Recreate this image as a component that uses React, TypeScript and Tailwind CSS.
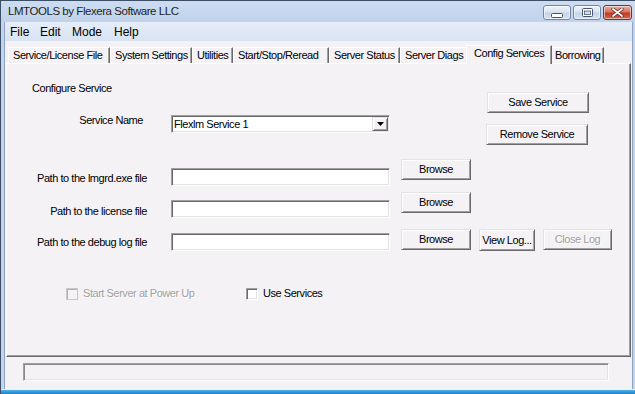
import React from 'react';

const raised =
  'border border-t-[#e3e3e3] border-l-[#e3e3e3] border-r-[#696969] border-b-[#696969] shadow-[inset_1px_1px_0_#ffffff,inset_-1px_-1px_0_#a0a0a0] bg-[#f5f2f6]';
const sunken =
  'border border-t-[#a0a0a0] border-l-[#a0a0a0] border-r-white border-b-white shadow-[inset_1px_1px_0_#696969,inset_-1px_-1px_0_#e3e3e3] bg-white';
const disabledText = 'text-[#a0a0a0] [text-shadow:1px_1px_0_#ffffff]';

type Tab = { label: string; cls: string; active?: boolean };

const tabs: Tab[] = [
  { label: 'Service/License File', cls: 'w-[102px]' },
  { label: 'System Settings', cls: 'w-[82px]' },
  { label: 'Utilities', cls: 'w-[41px]' },
  { label: 'Start/Stop/Reread', cls: 'w-[96px]' },
  { label: 'Server Status', cls: 'w-[71px]' },
  { label: 'Server Diags', cls: 'w-[68px]' },
  { label: 'Config Services', cls: 'w-[86px]', active: true },
  { label: 'Borrowing', cls: 'w-[54px]' },
];

function WinButton({ label, className = '', disabled }: { label: string; className?: string; disabled?: boolean }) {
  return (
    <button type="button" className={`${raised} flex items-center justify-center ${className}`}>
      <span className={disabled ? disabledText : ''}>{label}</span>
    </button>
  );
}

function CaptionButton({ kind }: { kind: 'min' | 'max' | 'close' }) {
  const base =
    kind === 'close'
      ? 'w-[29px] border-[#7a2e25] bg-[linear-gradient(#eab0a2,#d8735f_45%,#c23c28_55%,#d2664f)]'
      : 'w-[28px] border-[#6f87a8] bg-[linear-gradient(#eef3fa,#d9e4f2_45%,#c4d4e8_55%,#d6e2f1)]';
  return (
    <div className={`h-[15px] rounded-[3px] border flex items-center justify-center shadow-[inset_0_0_0_1px_rgba(255,255,255,0.55)] ${base}`}>
      {kind === 'min' && (
        <svg width="12" height="5" viewBox="0 0 12 5" className="mt-[5px]">
          <rect x="0.5" y="0.5" width="11" height="4" rx="1" fill="#ffffff" stroke="#45576f" />
        </svg>
      )}
      {kind === 'max' && (
        <svg width="11" height="9" viewBox="0 0 11 9">
          <rect x="0.5" y="0.5" width="10" height="8" rx="1" fill="#ffffff" stroke="#45576f" />
          <rect x="2.5" y="3" width="6" height="3.5" fill="#d5e0ee" stroke="#45576f" strokeWidth="0.8" />
        </svg>
      )}
      {kind === 'close' && (
        <svg width="13" height="9" viewBox="0 0 13 9">
          <path d="M2 1 L11 8 M11 1 L2 8" stroke="#5a1d16" strokeWidth="3.2" strokeLinecap="round" />
          <path d="M2 1 L11 8 M11 1 L2 8" stroke="#ffffff" strokeWidth="1.8" strokeLinecap="round" />
        </svg>
      )}
    </div>
  );
}

function PathRow({
  label,
  rowCls,
  labelCls,
  inputCls,
  children,
}: {
  label: string;
  rowCls: string;
  labelCls: string;
  inputCls: string;
  children: React.ReactNode;
}) {
  return (
    <div className={`flex items-start ${rowCls}`}>
      <div className={`w-[140px] text-right ${labelCls}`}>{label}</div>
      <div className={`${sunken} ml-[24px] w-[219px] h-[18px] ${inputCls}`} />
      {children}
    </div>
  );
}

export default function App() {
  return (
    <div className="w-[635px] h-[394px] overflow-hidden flex flex-col bg-[#c2d5ec] border-l border-t border-[#3d4f66] text-black">
      {/* title bar */}
      <div className="h-[21px] flex items-start bg-[linear-gradient(#cddcf0,#bfd3eb)]">
        <div className="pl-[7px] pt-[3px] leading-[15px] text-[11.5px] tracking-[-0.45px] font-['Liberation_Sans',Arial,sans-serif] text-[#1e1e1e]">
          LMTOOLS by Flexera Software LLC
        </div>
        <div className="ml-auto mr-[3px] mt-[4px] flex gap-[2px]">
          <CaptionButton kind="min" />
          <CaptionButton kind="max" />
          <CaptionButton kind="close" />
        </div>
      </div>

      {/* client */}
      <div className="flex-1 flex flex-col ml-[3px] mr-[2px] border-l border-r border-[#8da3c1] font-['Liberation_Sans',Arial,sans-serif]">
        <div className="h-[19px] flex items-start pt-[3px] leading-[15px] text-[12px] bg-[linear-gradient(#e6edf8,#d7e3f3)]">
          <div className="ml-[5px] w-[30px]">File</div>
          <div className="w-[32px]">Edit</div>
          <div className="w-[42px]">Mode</div>
          <div className="w-[30px]">Help</div>
        </div>

        <div className="flex-1 flex flex-col bg-[#f5f2f6] text-[11px] leading-[13px] tracking-[-0.45px]">
          {/* tabs */}
          <div className="h-[22px] flex items-end pl-[3px]">
            {tabs.map((t) =>
              t.active ? (
                <div
                  key={t.label}
                  className={`relative z-10 -mx-[2px] -mb-[1px] h-[19px] pl-[7px] pt-[1px] whitespace-nowrap bg-[#f5f2f6] border-t border-l border-r border-t-white border-l-white border-r-[#696969] shadow-[inset_-1px_0_0_#a0a0a0] ${t.cls}`}
                >
                  {t.label}
                </div>
              ) : (
                <div
                  key={t.label}
                  className={`h-[16px] pl-[4px] pt-[1px] whitespace-nowrap border-t border-l border-r border-t-white border-l-white border-r-[#696969] shadow-[inset_-1px_0_0_#a0a0a0] ${t.cls}`}
                >
                  {t.label}
                </div>
              )
            )}
          </div>

          {/* tab page */}
          <div className="ml-[1px] mr-[1px] h-[294px] flex flex-col border-t border-l border-t-white border-l-white border-r border-b border-r-[#696969] border-b-[#696969] shadow-[inset_-1px_-1px_0_#a0a0a0]">
            <div className="h-[95px] flex">
              <div className="w-[383px] flex flex-col">
                <div className="ml-[25px] mt-[18px]">Configure Service</div>
                <div className="mt-[19px] flex items-start">
                  <div className="w-[136px] text-right">Service Name</div>
                  <div className={`${sunken} ml-[28px] mt-[1px] w-[219px] h-[18px] flex items-center`}>
                    <span className="pl-[2px] flex-1 pt-[1px]">Flexlm Service 1</span>
                    <div className={`${raised} w-[16px] h-[14px] mr-[1px] flex items-center justify-center`}>
                      <svg width="7" height="4" viewBox="0 0 7 4">
                        <path d="M0 0 H7 L3.5 4 Z" fill="#000000" />
                      </svg>
                    </div>
                  </div>
                </div>
              </div>
              <div className="ml-[97px] flex flex-col">
                <WinButton label="Save Service" className="mt-[28px] w-[102px] h-[21px]" />
                <WinButton label="Remove Service" className="mt-[11px] -ml-[1px] w-[102px] h-[21px]" />
              </div>
            </div>

            <PathRow label="Path to the lmgrd.exe file" rowCls="h-[33px]" labelCls="mt-[13px]" inputCls="mt-[9px]">
              <WinButton label="Browse" className="ml-[11px] w-[70px] h-[21px]" />
            </PathRow>
            <PathRow label="Path to the license file" rowCls="h-[37px]" labelCls="mt-[13px]" inputCls="mt-[8px]">
              <WinButton label="Browse" className="ml-[11px] w-[70px] h-[21px]" />
            </PathRow>
            <PathRow label="Path to the debug log file" rowCls="h-[22px]" labelCls="mt-[7px]" inputCls="mt-[4px]">
              <WinButton label="Browse" className="ml-[11px] w-[70px] h-[21px]" />
              <WinButton label="View Log..." className="ml-[8px] w-[56px] h-[22px]" />
              <WinButton label="Close Log" className="ml-[8px] w-[69px] h-[21px]" disabled />
            </PathRow>

            <div className="mt-[36px] ml-[59px] h-[13px] flex items-center">
              <div className="w-[180px] flex items-center">
                <div className="w-[12px] h-[12px] border border-[#c9c6cb] bg-[#f5f2f6] shadow-[inset_1px_1px_0_#b4b1b6]" />
                <span className={`ml-[5px] ${disabledText}`}>Start Server at Power Up</span>
              </div>
              <div className="flex items-center">
                <div className={`${sunken} w-[12px] h-[12px]`} />
                <span className="ml-[5px]">Use Services</span>
              </div>
            </div>
          </div>

          {/* status bar */}
          <div className="mt-[6px] ml-[18px] w-[586px] h-[18px] border border-t-[#a0a0a0] border-l-[#a0a0a0] border-r-white border-b-white shadow-[inset_1px_1px_0_#8a8a8a,inset_-1px_-1px_0_#e3e3e3]" />
        </div>
      </div>

      {/* bottom frame */}
      <div className="h-[1px] bg-[#e9f0f9]" />
      <div className="h-[4px] bg-[linear-gradient(#4fb3e8,#1d7fcf)]" />
    </div>
  );
}
